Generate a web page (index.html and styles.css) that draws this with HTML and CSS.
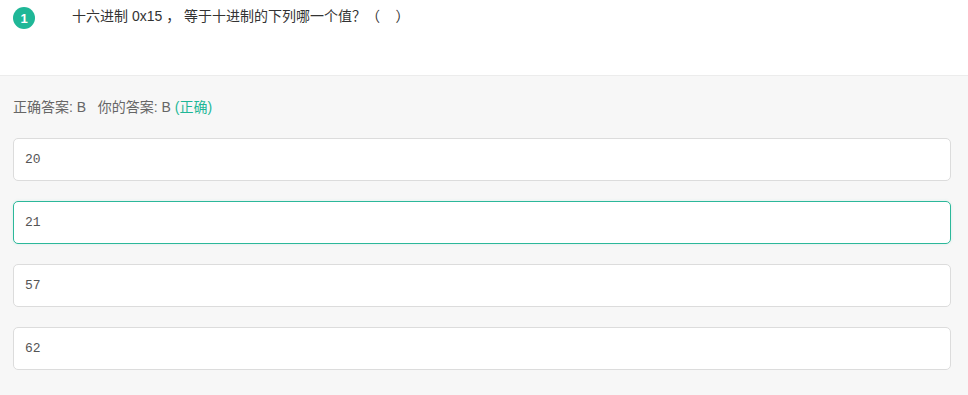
FILE: index.html
```html
<!DOCTYPE html>
<html lang="zh">
<head>
<meta charset="utf-8">
<link rel="stylesheet" href="styles.css">
</head>
<body>
<div class="question">
  <span class="badge">1</span>
  <span class="q-text">十六进制 0x15 ， 等于十进制的下列哪一个值？（&nbsp;&nbsp;&nbsp;&nbsp;）</span>
</div>
<div class="answer">
  <div class="result">正确答案: B &nbsp; 你的答案: B <span class="ok">(正确)</span></div>
  <div class="options">
    <div class="option">20</div>
    <div class="option selected">21</div>
    <div class="option">57</div>
    <div class="option">62</div>
  </div>
</div>
</body>
</html>
```
FILE: styles.css
```css
html, body {
  margin: 0;
  padding: 0;
  background: #f7f7f7;
  font-family: "Liberation Sans", "Noto Sans CJK SC", sans-serif;
  color: #333;
}
.question {
  background: #fff;
  height: 76px;
  border-bottom: 1px solid #ececec;
  display: flex;
  align-items: flex-start;
  padding: 7px 0 0 13px;
  box-sizing: border-box;
}
.badge {
  width: 22px;
  height: 22px;
  border-radius: 50%;
  background: #1fb797;
  color: #fff;
  font-size: 13px;
  font-weight: bold;
  display: flex;
  align-items: center;
  justify-content: center;
}
.q-text {
  margin-left: 37px;
  font-size: 14px;
  line-height: 18px;
  color: #333;
}
.answer {
  padding: 21px 17px 0 13px;
}
.result {
  font-size: 14px;
  line-height: 20px;
  color: #666;
}
.ok {
  color: #1fb797;
}
.options {
  display: flex;
  flex-direction: column;
  gap: 20px;
  margin-top: 21px;
}
.option {
  height: 43px;
  box-sizing: border-box;
  border: 1px solid #dcdcdc;
  border-radius: 5px;
  background: #fff;
  display: flex;
  align-items: center;
  padding-left: 11px;
  font-family: "Liberation Mono", monospace;
  font-size: 13px;
  color: #555;
}
.option.selected {
  border-color: #2cb89a;
  box-shadow: 0 0 3px rgba(44, 184, 154, 0.15);
}
```
